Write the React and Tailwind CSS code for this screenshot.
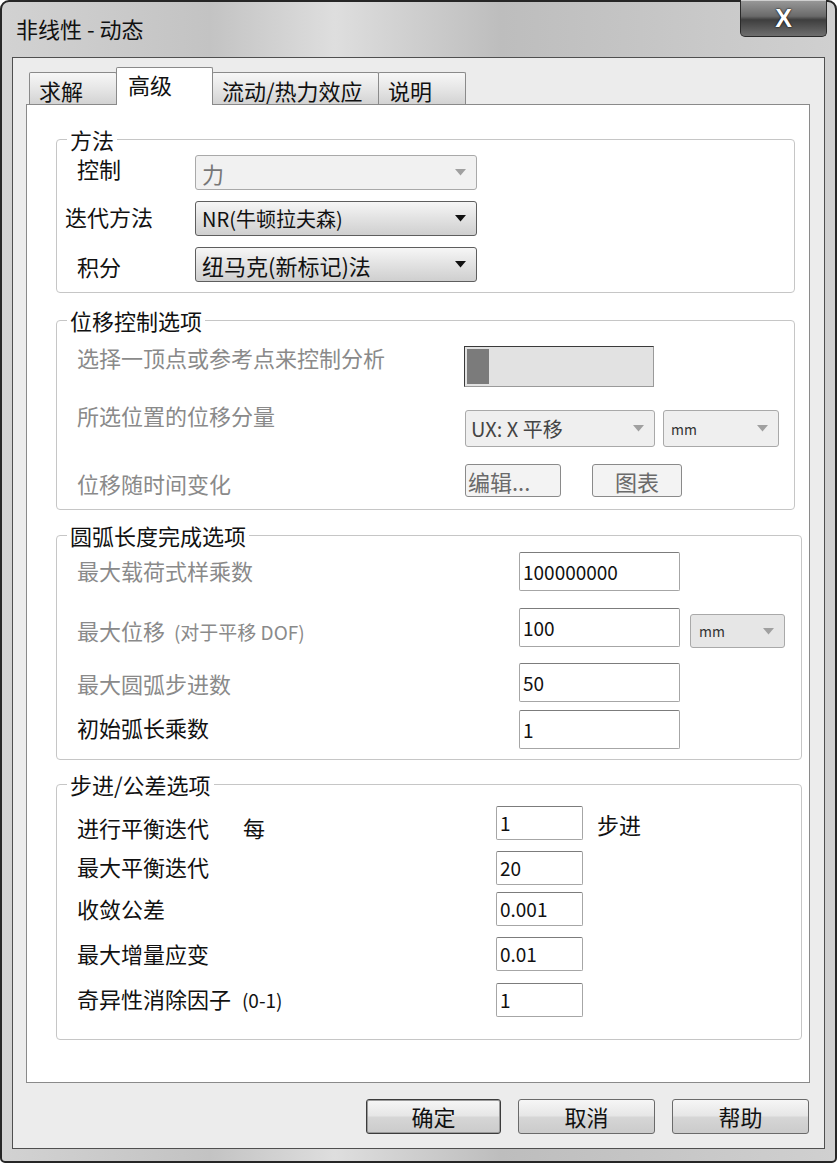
import React from 'react';

const cjk = "font-['Noto_Sans_CJK_SC','Noto_Sans',sans-serif]";

const Arrow = ({ dark }) => (
    <svg width="11" height="7" viewBox="0 0 11 7" className="shrink-0">
        <path d="M0 0h11L5.5 6.5z" fill={dark ? '#111' : '#a0a0a0'} />
    </svg>
);

const Combo = ({ children, className = '', enabled = false, tone }) => (
    <div
        className={`flex items-center justify-between rounded-[3px] border pr-[10px] ${
            enabled
                ? 'border-[#5e5e5e] bg-[linear-gradient(180deg,#f6f6f6,#e2e2e2_50%,#cfcfcf)]'
                : 'border-[#a9a9a9]'
        } ${tone || (enabled ? 'text-[#111]' : 'text-[#777]')} ${className}`}
    >
        <span className="whitespace-nowrap">{children}</span>
        <Arrow dark={enabled} />
    </div>
);

const Field = ({ value, className = '' }) => (
    <div
        className={`flex items-center rounded-[2px] border border-[#a6a6a6] border-t-[#7c7c7c] bg-white pl-[3px] text-[19px] text-[#111] ${className}`}
    >
        {value}
    </div>
);

const Group = ({ title, className = '', children }) => (
    <fieldset className={`rounded-[4px] border border-[#c6c6c6] ${className}`}>
        <legend className="ml-[10px] px-[3px] text-[22px] leading-[24px] text-[#111]">{title}</legend>
        {children}
    </fieldset>
);

const Tab = ({ label, active, w }) =>
    active ? (
        <div className={`z-10 -mb-px flex h-[38px] items-start rounded-t-[2px] border border-b-0 border-[#8a8a8a] bg-white pl-[11px] pt-[4px] text-[22px] leading-[24px] text-[#111] ${w}`}>
            {label}
        </div>
    ) : (
        <div className={`flex h-[32px] items-start rounded-t-[2px] border border-b-0 border-[#8a8a8a] bg-[linear-gradient(180deg,#f7f7f7,#e6e6e6_50%,#d3d3d3)] pl-[9px] pt-[5px] text-[22px] leading-[24px] text-[#111] ${w}`}>
            {label}
        </div>
    );

const DlgButton = ({ label, primary, w }) => (
    <button
        className={`flex h-[35px] items-center justify-center rounded-[3px] border bg-[linear-gradient(180deg,#f6f6f6,#e6e6e6_48%,#d6d6d6_52%,#cbcbcb)] text-[22px] text-[#111] ${
            primary ? 'border-[#3c3c3c] shadow-[inset_0_0_0_1px_#9a9a9a]' : 'border-[#6a6a6a]'
        } ${w}`}
    >
        {label}
    </button>
);

export default function App() {
    return (
        <div className={`h-[1163px] w-[837px] bg-white ${cjk}`}>
            <div className="flex h-full flex-col rounded-t-[9px] rounded-b-[5px] border-2 border-[#262626] bg-[linear-gradient(90deg,#d2d2d2,#c3c3c3_25%,#dedede_40%,#bdbdbd_60%,#c9c9c9_85%,#d0d0d0)] px-[10px] pb-[12px]">
                {/* Title bar */}
                <div className="flex h-[55px] shrink-0 items-start justify-between">
                    <div className="whitespace-pre pl-[4px] pt-[14px] text-[22px] leading-[24px] text-[#111]">非线性 - 动态</div>
                    <div className="-mt-[2px] mr-[-2px] flex h-[37px] w-[87px] items-center justify-center rounded-b-[5px] border border-t-0 border-[#2a2a2a] bg-[linear-gradient(180deg,#9a9a9a,#6a6a6a_45%,#3e3e3e_55%,#6e6e6e)] shadow-[inset_0_1px_0_#cfcfcf]">
                        <span className="font-['Liberation_Sans',sans-serif] text-[25px] font-black leading-none text-white [text-shadow:0_0_2px_#111,0_0_1px_#111]">X</span>
                    </div>
                </div>

                {/* Client area */}
                <div className="flex flex-1 flex-col border border-[#4f4f4f] bg-[#ececec] pl-[13px] pr-[14px] pt-[9px]">
                    {/* Tabs */}
                    <div className="flex h-[37px] items-end pl-[3px]">
                        <Tab label="求解" w="w-[88px]" />
                        <Tab label="高级" active w="w-[97px] -ml-px" />
                        <Tab label="流动/热力效应" w="w-[167px] -ml-px" />
                        <Tab label="说明" w="w-[88px] -ml-px" />
                    </div>

                    {/* Panel */}
                    <div className="flex h-[979px] flex-col border border-[#8a8a8a] bg-white pl-[29px] text-[22px] leading-[24px]">
                        {/* 方法 */}
                        <Group title="方法" className="mt-[22px] w-[739px] px-0 pb-[10px] pt-[4px]">
                            <div className="flex items-start">
                                <div className="mt-[1px] w-[138px] pl-[20px] text-[#111]">控制</div>
                                <Combo className="h-[35px] w-[282px] bg-[#f1f1f1] pl-[6px]">力</Combo>
                            </div>
                            <div className="mt-[11px] flex items-start">
                                <div className="mt-[3px] w-[138px] pl-[8px] text-[#111]">迭代方法</div>
                                <Combo enabled className="h-[35px] w-[282px] pl-[6px] text-[20px]">
                                    NR(牛顿拉夫森)
                                </Combo>
                            </div>
                            <div className="mt-[11px] flex items-start">
                                <div className="mt-[7px] w-[138px] pl-[20px] text-[#111]">积分</div>
                                <Combo enabled className="h-[35px] w-[282px] pl-[6px]">
                                    纽马克(新标记)法
                                </Combo>
                            </div>
                        </Group>

                        {/* 位移控制选项 */}
                        <Group title="位移控制选项" className="mt-[15px] w-[739px] pb-[12px] pt-[13px]">
                            <div className="flex h-[42px] items-start">
                                <div className="w-[407px] pl-[20px] text-[#8a8a8a]">选择一顶点或参考点来控制分析</div>
                                <div className="mt-[1px] flex h-[41px] w-[190px] items-stretch border border-[#3a3a3a] border-b-[#9a9a9a] border-r-[#9a9a9a] bg-[#e2e2e2] p-[2px]">
                                    <div className="w-[22px] bg-[#7b7b7b]" />
                                </div>
                            </div>
                            <div className="mt-[16px] flex h-[44px] items-start">
                                <div className="w-[408px] pl-[20px] text-[#8a8a8a]">所选位置的位移分量</div>
                                <Combo tone="text-[#444]" className="mt-[7px] h-[37px] w-[190px] bg-[#efefef] pl-[5px] text-[20px]">
                                    UX: X 平移
                                </Combo>
                                <Combo tone="text-[#333]" className="ml-[8px] mt-[7px] h-[37px] w-[116px] bg-[#efefef] pl-[7px] text-[14px]">
                                    mm
                                </Combo>
                            </div>
                            <div className="mt-[17px] flex h-[33px] items-start">
                                <div className="mt-[7px] w-[408px] pl-[20px] text-[#8a8a8a]">位移随时间变化</div>
                                <div className="flex h-[33px] w-[96px] items-center rounded-[3px] border border-[#8a8a8a] bg-[#f3f3f3] pl-[2px] text-[#6a6a6a]">
                                    编辑...
                                </div>
                                <div className="ml-[31px] flex h-[33px] w-[90px] items-center justify-center rounded-[3px] border border-[#8a8a8a] bg-[#f3f3f3] text-[#6a6a6a]">
                                    图表
                                </div>
                            </div>
                        </Group>

                        {/* 圆弧长度完成选项 */}
                        <Group title="圆弧长度完成选项" className="mt-[13px] w-[746px] pb-[10px] pt-[5px]">
                            <div className="flex h-[39px] items-start">
                                <div className="mt-[6px] w-[462px] pl-[20px] text-[#8a8a8a]">最大载荷式样乘数</div>
                                <Field value="100000000" className="h-[39px] w-[161px]" />
                            </div>
                            <div className="mt-[17px] flex h-[40px] items-start">
                                <div className="mt-[10px] w-[462px] pl-[20px] text-[#8a8a8a]">
                                    最大位移 <span className="ml-[4px] text-[19px]">(对于平移 DOF)</span>
                                </div>
                                <Field value="100" className="h-[39px] w-[161px]" />
                                <Combo tone="text-[#333]" className="ml-[10px] mt-[6px] h-[34px] w-[95px] bg-[#e6e6e6] pl-[8px] text-[14px]">
                                    mm
                                </Combo>
                            </div>
                            <div className="mt-[15px] flex h-[39px] items-start">
                                <div className="mt-[8px] w-[462px] pl-[20px] text-[#8a8a8a]">最大圆弧步进数</div>
                                <Field value="50" className="h-[39px] w-[161px]" />
                            </div>
                            <div className="mt-[8px] flex h-[39px] items-start">
                                <div className="mt-[5px] w-[462px] pl-[20px] text-[#111]">初始弧长乘数</div>
                                <Field value="1" className="h-[39px] w-[161px]" />
                            </div>
                        </Group>

                        {/* 步进/公差选项 */}
                        <Group title="步进/公差选项" className="mt-[12px] w-[746px] pb-[22px] pt-[10px]">
                            <div className="flex h-[34px] items-start">
                                <div className="mt-[9px] flex w-[439px] pl-[20px] text-[#111]">
                                    <span>进行平衡迭代</span>
                                    <span className="ml-[34px]">每</span>
                                </div>
                                <Field value="1" className="h-[34px] w-[87px]" />
                                <div className="ml-[14px] mt-[6px] text-[#111]">步进</div>
                            </div>
                            <div className="mt-[11px] flex h-[34px] items-start">
                                <div className="mt-[3px] w-[439px] pl-[20px] text-[#111]">最大平衡迭代</div>
                                <Field value="20" className="h-[34px] w-[87px]" />
                            </div>
                            <div className="mt-[7px] flex h-[34px] items-start">
                                <div className="mt-[4px] w-[439px] pl-[20px] text-[#111]">收敛公差</div>
                                <Field value="0.001" className="h-[34px] w-[87px]" />
                            </div>
                            <div className="mt-[11px] flex h-[34px] items-start">
                                <div className="mt-[4px] w-[439px] pl-[20px] text-[#111]">最大增量应变</div>
                                <Field value="0.01" className="h-[34px] w-[87px]" />
                            </div>
                            <div className="mt-[12px] flex h-[34px] items-start">
                                <div className="mt-[3px] w-[439px] pl-[20px] text-[#111]">
                                    奇异性消除因子 <span className="ml-[6px] text-[19px]">(0-1)</span>
                                </div>
                                <Field value="1" className="h-[34px] w-[87px]" />
                            </div>
                        </Group>
                    </div>

                    {/* Buttons */}
                    <div className="mr-[1px] flex justify-end gap-[17px] pt-[16px]">
                        <DlgButton label="确定" primary w="w-[135px]" />
                        <DlgButton label="取消" w="w-[137px]" />
                        <DlgButton label="帮助" w="w-[137px]" />
                    </div>
                </div>
            </div>
        </div>
    );
}
